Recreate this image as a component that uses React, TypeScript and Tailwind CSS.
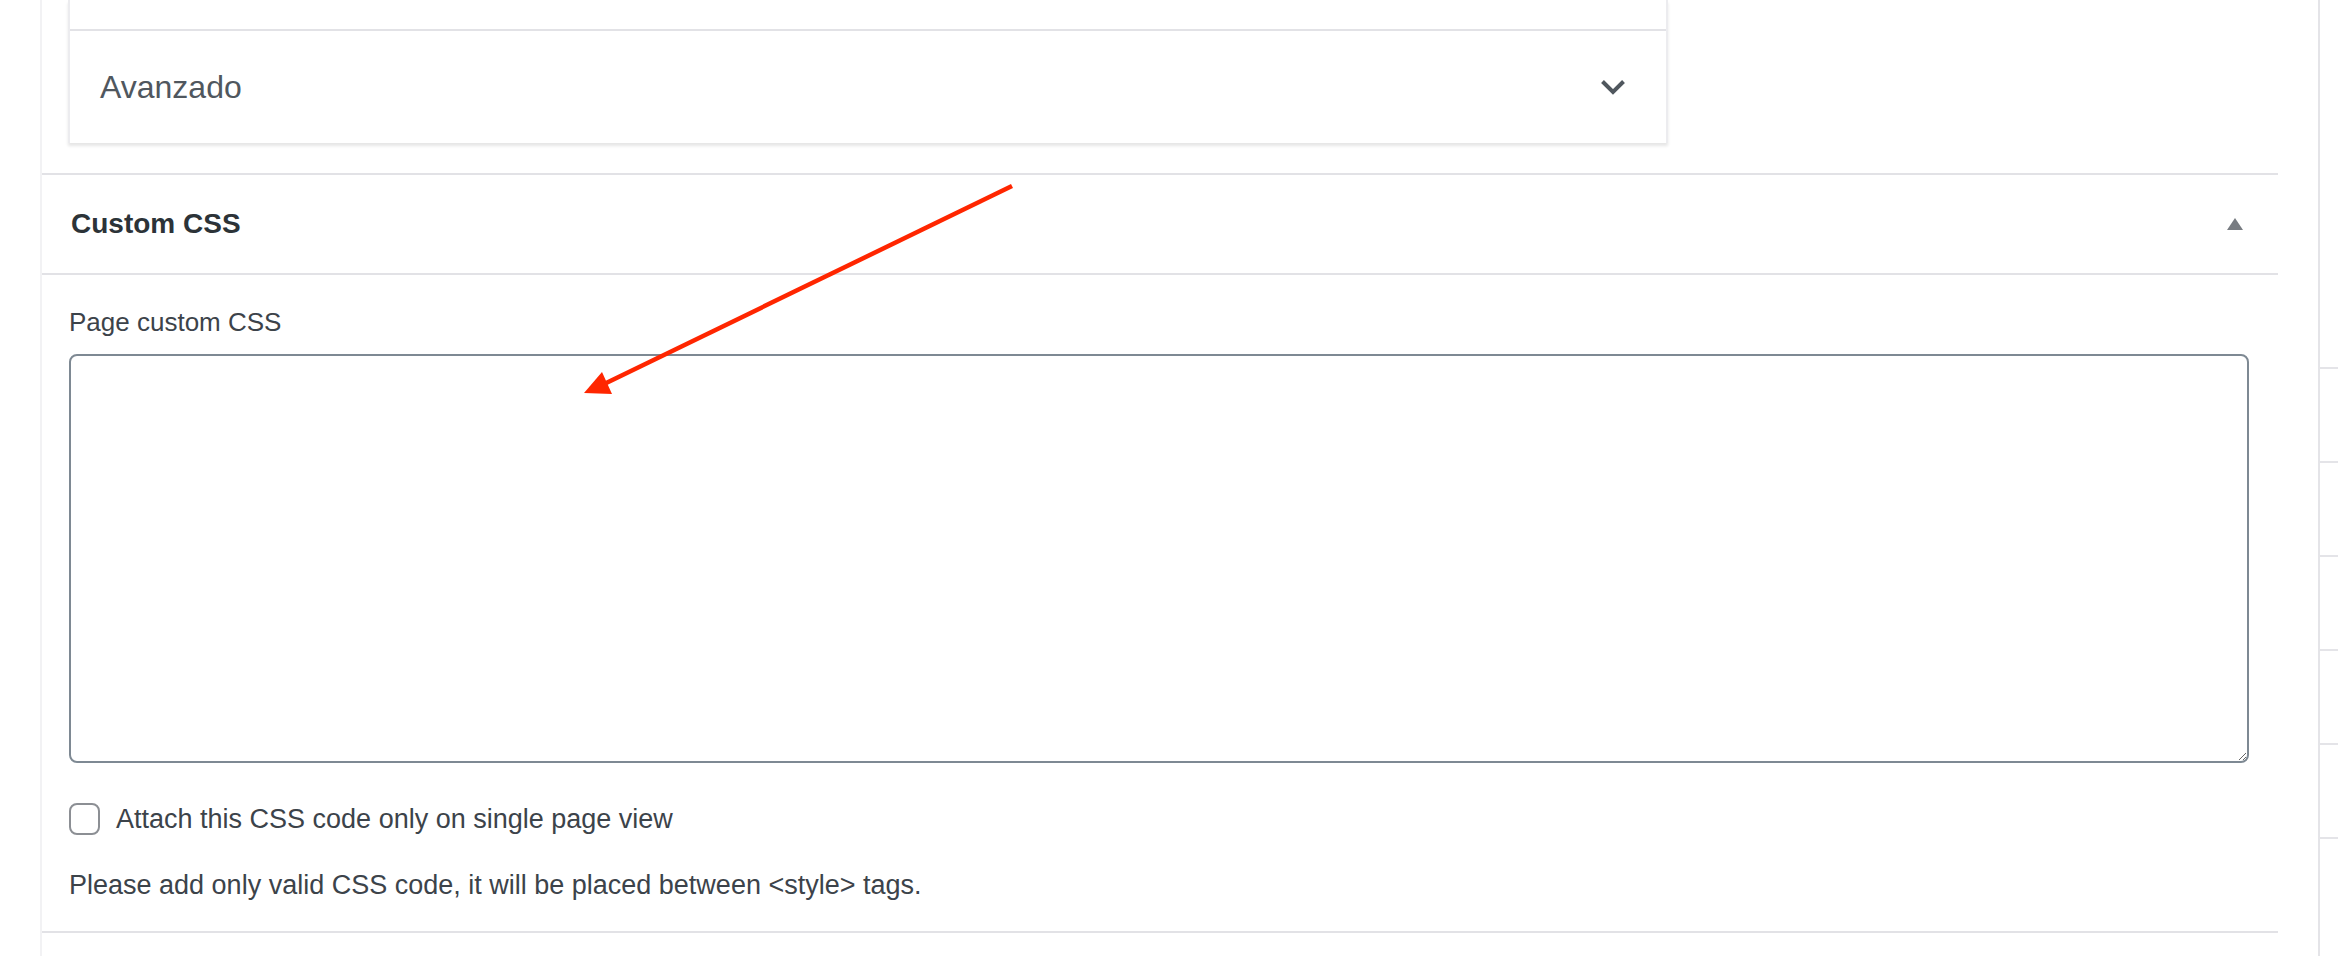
import React from "react";

function ChevronDown() {
  return (
    <svg width="26" height="16" viewBox="0 0 26 16" fill="none">
      <polyline points="2.5,2.5 13,13 23.5,2.5" stroke="#50575e" strokeWidth="4" />
    </svg>
  );
}

function Arrow() {
  return (
    <svg className="pointer-events-none absolute left-0 top-0" width="2338" height="956">
      <line x1="1012" y1="186" x2="600" y2="386" stroke="#ff2600" strokeWidth="4.5" />
      <polygon points="584,393 602,372 612,394" fill="#ff2600" />
    </svg>
  );
}

export default function App() {
  const rows = [0, 1, 2, 3, 4, 5];

  return (
    <div className="relative flex h-[956px] w-[2338px] overflow-hidden bg-white font-['Liberation_Sans',Arial,sans-serif] text-[#3c434a]">
      <div className="w-[40px] shrink-0" />

      {/* Main postbox column */}
      <div className="flex w-[2238px] shrink-0 flex-col border-l-2 border-[#f2f2f4]">
        {/* Accordion card */}
        <div className="h-[173px] pl-[26px]">
          <div className="w-[1600px] border-x-2 border-[#ececef] bg-white shadow-[0_3px_3px_rgba(0,0,0,0.10)]">
            <div className="h-[31px] border-b-2 border-[#e2e2e6]" />
            <div className="flex h-[112px] items-center justify-between pl-[30px] pr-[40px]">
              <span className="text-[32px] leading-none text-[#50575e]">Avanzado</span>
              <ChevronDown />
            </div>
          </div>
        </div>

        {/* Postbox header */}
        <div className="flex h-[102px] items-center justify-between border-y-2 border-[#e2e2e6] pl-[29px] pr-[35px]">
          <h2 className="text-[28px] font-bold leading-none text-[#2c3338]">Custom CSS</h2>
          <span className="h-0 w-0 border-x-[8px] border-b-[12px] border-x-transparent border-b-[#787c82]" />
        </div>

        {/* Postbox body */}
        <div className="flex flex-col border-b-2 border-[#e2e2e6] px-[27px] pb-[28px] pt-[29px]">
          <label className="h-[36px] text-[26px] leading-[36px] text-[#3c434a]">Page custom CSS</label>
          <textarea className="mt-[14px] h-[409px] w-[2180px] rounded-[8px] border-2 border-[#7e8993] bg-white outline-none" />
          <div className="mt-[40px] flex h-[32px] items-center gap-[16px]">
            <span className="h-[32px] w-[31px] rounded-[8px] border-2 border-[#8c8f94] bg-white" />
            <span className="text-[27px] leading-none text-[#3c434a]">
              Attach this CSS code only on single page view
            </span>
          </div>
          <p className="mt-[32px] h-[36px] text-[27px] leading-[36px] text-[#3c434a]">
            Please add only valid CSS code, it will be placed between &lt;style&gt; tags.
          </p>
        </div>
      </div>

      <div className="w-[40px] shrink-0" />

      {/* Right column edge */}
      <div className="flex flex-1 flex-col border-l-2 border-[#e4e4e8]">
        <div className="h-[367px] shrink-0" />
        {rows.map((r) => (
          <div key={r} className="h-[94px] shrink-0 border-t-2 border-[#e4e4e8]" />
        ))}
      </div>

      <Arrow />
    </div>
  );
}
